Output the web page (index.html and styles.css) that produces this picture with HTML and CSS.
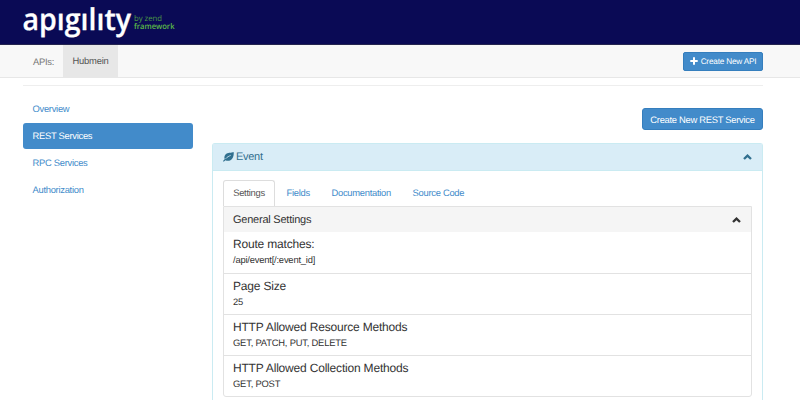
FILE: index.html
```
<!DOCTYPE html>
<html lang="en">
<head>
<meta charset="utf-8">
<title>Apigility</title>
<link rel="stylesheet" href="styles.css">
</head>
<body>
<header class="masthead">
  <svg class="logo" width="160" height="44" viewBox="0 0 160 44">
    <text class="logo-name" x="-0.5" y="30" textLength="108.5" lengthAdjust="spacingAndGlyphs">apıgılıty</text>
    <text class="logo-by" x="111" y="20.5" textLength="28" lengthAdjust="spacingAndGlyphs">by zend</text>
    <text class="logo-fw" x="111" y="28.5" textLength="40.5" lengthAdjust="spacingAndGlyphs">framework</text>
  </svg>
</header>
<nav class="navbar">
  <span class="nav-label">APIs:</span>
  <a class="nav-item">Hubmein</a>
  <a class="btn btn-small"><svg class="plus" width="8" height="8" viewBox="0 0 8 8"><path d="M4 0.3V7.7M0.3 4H7.7"/></svg><span>Create New API</span></a>
</nav>
<div class="container">
  <aside class="sidebar">
    <a>Overview</a>
    <a class="active">REST Services</a>
    <a>RPC Services</a>
    <a>Authorization</a>
  </aside>
  <main class="content">
    <div class="actions"><a class="btn">Create New REST Service</a></div>
    <section class="panel">
      <div class="panel-heading">
        <svg class="leaf" width="11" height="10" viewBox="0 0 11 10"><path class="blade" d="M10.6 0C8.5 1 4.5.4 2.5 2.5C1.1 4 1.2 6 1.8 7.1L0 9L.7 9.8L2.5 8.2C4.3 9.2 7.3 8.9 9 6.9C10.7 4.7 11 2 10.6 0Z"/><path class="vein" d="M2.6 6.8C4.2 4.8 5.8 4.4 7.7 3.3"/></svg>
        <span>Event</span>
        <svg class="chevron" width="9" height="6" viewBox="0 0 9 6"><path d="M1 5L4.5 1.6L8 5"/></svg>
      </div>
      <div class="panel-body">
        <div class="tabs"><a class="active">Settings</a><a>Fields</a><a>Documentation</a><a>Source Code</a></div>
        <div class="settings">
          <div class="settings-heading"><span>General Settings</span><svg class="chevron" width="9" height="6" viewBox="0 0 9 6"><path d="M1 5L4.5 1.6L8 5"/></svg></div>
          <div class="row"><h4>Route matches:</h4><p>/api/event[/:event_id]</p></div>
          <div class="row"><h4>Page Size</h4><p>25</p></div>
          <div class="row"><h4>HTTP Allowed Resource Methods</h4><p>GET, PATCH, PUT, DELETE</p></div>
          <div class="row"><h4>HTTP Allowed Collection Methods</h4><p>GET, POST</p></div>
        </div>
      </div>
    </section>
  </main>
</div>
</body>
</html>
```
FILE: styles.css
```
* { box-sizing: border-box; }
body {
  margin: 0;
  height: 400px;
  overflow: hidden;
  background: #fff;
  color: #333;
  font: 9.4px/13px "Liberation Sans", Arial, sans-serif;
  letter-spacing: -.28px;
  text-rendering: geometricPrecision;
}
svg { display: block; }
.masthead {
  height: 45px;
  padding-left: 23px;
  background: #0a0a55;
  border-bottom: 1px solid #25254f;
}
.logo { overflow: visible; letter-spacing: 0; }
.logo-name { font: 600 30px "Open Sans", sans-serif; fill: #fff; stroke: #fff; stroke-width: .3; }
.logo-by { font: 8px "Open Sans", sans-serif; fill: #4a9d45; }
.logo-fw { font: 600 8px "Open Sans", sans-serif; fill: #5bb947; }
.navbar {
  display: flex;
  align-items: center;
  height: 33px;
  padding: 0 37px 0 33px;
  background: #f8f8f8;
  border-bottom: 1px solid #e7e7e7;
  color: #777;
}
.nav-label { width: 30px; }
.nav-item {
  width: 55px;
  height: 32px;
  line-height: 32px;
  text-align: center;
  background: #e7e7e7;
  color: #555;
  letter-spacing: -.2px;
}
.btn {
  display: flex;
  align-items: center;
  justify-content: center;
  width: 121px;
  height: 22px;
  border: 1px solid #357ebd;
  border-radius: 3px;
  background: #428bca;
  color: #fff;
}
.btn-small {
  gap: 3px;
  width: 80px;
  height: 19px;
  margin-left: auto;
  border-radius: 2px;
  font-size: 8.2px;
  letter-spacing: -.18px;
}
.plus { fill: none; stroke: #fff; stroke-width: 2; }
.container {
  display: flex;
  justify-content: space-between;
  width: 740px;
  height: 315px;
  overflow: hidden;
  margin: 7px 0 0 23px;
  border-top: 1px solid #eee;
}
.sidebar {
  display: flex;
  flex-direction: column;
  gap: 1.3px;
  width: 170px;
  padding-top: 9.5px;
}
.sidebar a {
  height: 26px;
  padding-left: 9.5px;
  line-height: 25.4px;
  border-radius: 3px;
  color: #428bca;
}
.sidebar .active { background: #428bca; color: #fff; }
.content { width: 551px; padding-top: 22px; }
.actions { display: flex; justify-content: flex-end; }
.panel {
  margin-top: 13px;
  border: 1px solid #caebf2;
  border-bottom: 0;
  border-radius: 3px 3px 0 0;
}
.panel-heading {
  display: flex;
  align-items: center;
  gap: 2px;
  height: 27px;
  padding: 0 10px;
  border-bottom: 1px solid #caebf2;
  background: #d9edf7;
  color: #31708f;
  font-size: 11px;
}
.leaf .blade { fill: #31708f; }
.leaf .vein { fill: none; stroke: #d9edf7; stroke-width: .8; }
.chevron { margin-left: auto; fill: none; stroke: currentColor; stroke-width: 2.3; }
.panel-heading .chevron { margin-bottom: 1px; }
.panel-body { padding: 9px 10px; }
.tabs { display: flex; }
.tabs a {
  height: 26px;
  padding: 0 9.2px;
  border: 1px solid transparent;
  border-bottom: 0;
  line-height: 24.6px;
  color: #428bca;
}
.tabs a + a { margin-left: 1.3px; }
.tabs .active { border-color: #ddd; border-radius: 3px 3px 0 0; color: #555; }
.settings { border: 1px solid #e2e2e2; border-radius: 0 0 3px 3px; }
.settings-heading {
  display: flex;
  align-items: center;
  height: 25px;
  padding: 1px 10px 0 9px;
  background: #f5f5f5;
  font-size: 11px;
  letter-spacing: -.23px;
}
.settings-heading .chevron { margin-bottom: 1px; }
.row { height: 41px; padding: 5px 9px 0; }
.row + .row { border-top: 1px solid #e2e2e2; }
.row h4 { margin: 0; font: 12px/15px "Liberation Sans", Arial, sans-serif; letter-spacing: -.19px; }
.row p { margin: 1px 0 0; line-height: 13px; letter-spacing: -.2px; }
```
